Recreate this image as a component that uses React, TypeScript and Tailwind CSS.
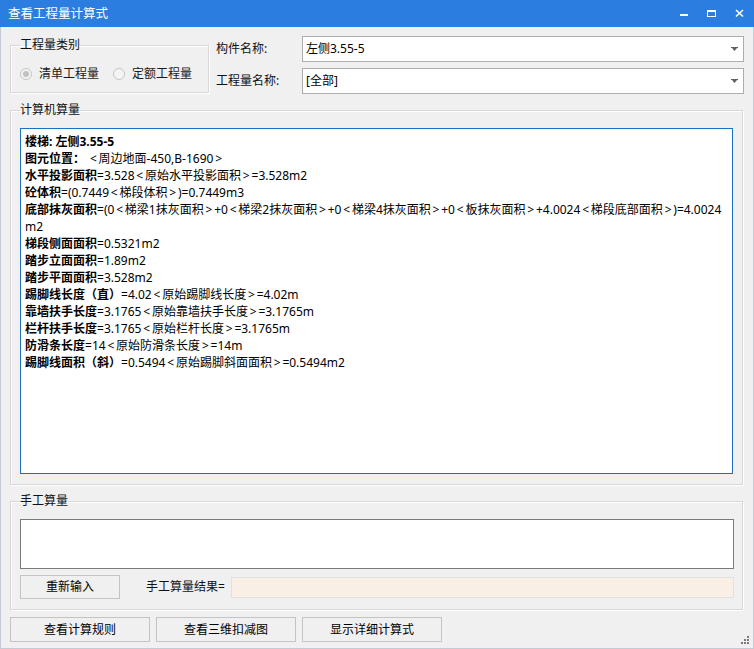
import type { ReactNode } from 'react';

const lines: { label: string; rest?: string }[] = [
  { label: '图元位置：', rest: ' <周边地面-450,B-1690>' },
  { label: '水平投影面积', rest: '=3.528<原始水平投影面积>=3.528m2' },
  { label: '砼体积', rest: '=(0.7449<梯段体积>)=0.7449m3' },
  {
    label: '底部抹灰面积',
    rest: '=(0<梯梁1抹灰面积>+0<梯梁2抹灰面积>+0<梯梁4抹灰面积>+0<板抹灰面积>+4.0024<梯段底部面积>)=4.0024',
  },
  { label: '', rest: 'm2' },
  { label: '梯段侧面面积', rest: '=0.5321m2' },
  { label: '踏步立面面积', rest: '=1.89m2' },
  { label: '踏步平面面积', rest: '=3.528m2' },
  { label: '踢脚线长度（直）', rest: '=4.02<原始踢脚线长度>=4.02m' },
  { label: '靠墙扶手长度', rest: '=3.1765<原始靠墙扶手长度>=3.1765m' },
  { label: '栏杆扶手长度', rest: '=3.1765<原始栏杆长度>=3.1765m' },
  { label: '防滑条长度', rest: '=14<原始防滑条长度>=14m' },
  { label: '踢脚线面积（斜）', rest: '=0.5494<原始踢脚斜面面积>=0.5494m2' },
];

// angle brackets in the original font are wide, pad them a little
function Formula({ text }: { text: string }) {
  return (
    <>
      {text.split(/([<>])/).map((part, i) =>
        part === '<' || part === '>' ? (
          <span key={i} className="px-[1.8px]">
            {part}
          </span>
        ) : (
          part
        ),
      )}
    </>
  );
}

function GroupBox({ title, className, children }: { title: string; className?: string; children: ReactNode }) {
  return (
    <fieldset
      className={`border border-[#d7d7d7] shadow-[inset_1px_1px_0_#ffffff,1px_1px_0_#ffffff] ${className ?? ''}`}
    >
      <legend className="px-0 leading-[16px] text-[#111]">{title}</legend>
      {children}
    </fieldset>
  );
}

function Radio({ checked, label }: { checked?: boolean; label: string }) {
  return (
    <div className="flex items-center gap-[7px]">
      <span className="flex h-[12px] w-[12px] items-center justify-center rounded-full border border-[#c6c6c6] bg-[#f4f4f4]">
        {checked && <span className="h-[6px] w-[6px] rounded-full bg-[#c2c2c2]" />}
      </span>
      <span className="text-[#1a1a1a]">{label}</span>
    </div>
  );
}

function Combo({ value }: { value: string }) {
  return (
    <div className="flex h-[26px] w-[442px] items-center justify-between border border-[#adadad] bg-white pl-[3px] pr-[5px]">
      <span className="text-black">{value}</span>
      <svg width="7" height="4" viewBox="0 0 7 4">
        <path d="M0 0h7v1H0z M1 1h5L3.5 4z" fill="#606060" />
      </svg>
    </div>
  );
}

function WinButton({ label, className }: { label: string; className?: string }) {
  return (
    <button
      className={`flex items-center justify-center border border-[#c4c4c4] bg-[#f0f0f0] text-black ${className ?? ''}`}
    >
      {label}
    </button>
  );
}

export default function App() {
  return (
    <div className="relative flex h-[649px] w-[754px] flex-col border-x border-b border-[#c5cbd5] bg-[#f0f0f0] font-['Noto_Sans','Noto_Sans_CJK_SC',sans-serif] text-[12px] leading-[16px]">
      {/* Title bar */}
      <div className="-mx-[1px] flex h-[27px] shrink-0 items-center justify-between bg-[#2b7ee0] pl-[8px] text-white">
        <span className="text-[12.5px]">查看工程量计算式</span>
        <div className="flex items-center">
          <svg width="28" height="27" viewBox="0 0 28 27">
            <rect x="10" y="14" width="8" height="2" fill="#fff" />
          </svg>
          <svg width="28" height="27" viewBox="0 0 28 27">
            <rect x="9.5" y="10.5" width="8" height="6" fill="none" stroke="#fff" strokeWidth="1" />
            <rect x="9" y="10" width="9" height="2" fill="#fff" />
          </svg>
          <svg width="28" height="27" viewBox="0 0 28 27">
            <path d="M10 10l7 6.5M17 10l-7 6.5" stroke="#fff" strokeWidth="1.6" />
          </svg>
        </div>
      </div>

      <div className="flex flex-1 flex-col px-[9px]">
        {/* Top row */}
        <div className="mt-[9px] flex">
          <GroupBox title="工程量类别" className="mt-[1px] w-[199px] self-start pl-[9px] pt-[13px] pb-[10px]">
            <div className="flex items-center gap-[14px]">
              <Radio checked label="清单工程量" />
              <Radio label="定额工程量" />
            </div>
          </GroupBox>
          <div className="ml-[7px] flex flex-col gap-[6px]">
            <div className="flex items-center">
              <span className="w-[86px] text-[#111]">构件名称:</span>
              <Combo value="左侧3.55-5" />
            </div>
            <div className="flex items-center">
              <span className="w-[86px] text-[#111]">工程量名称:</span>
              <Combo value="[全部]" />
            </div>
          </div>
        </div>

        {/* 计算机算量 */}
        <GroupBox title="计算机算量" className="mt-[8px] mr-[1px] pl-[9px] pr-[9px] pt-[10px] pb-[10px]">
          <div className="h-[346px] overflow-hidden border border-[#1c70c4] bg-white pl-[4px] pt-[4px] leading-[17px] text-black">
            <div className="whitespace-nowrap font-bold">楼梯: 左侧3.55-5</div>
            {lines.map((l, i) => (
              <div key={i} className="whitespace-nowrap">
                {l.label && <span className="font-bold">{l.label}</span>}
                {l.rest && <Formula text={l.rest} />}
              </div>
            ))}
          </div>
        </GroupBox>

        {/* 手工算量 */}
        <GroupBox title="手工算量" className="mt-[8px] mr-[1px] pl-[9px] pr-[8px] pt-[10px] pb-[10px]">
          <div className="h-[50px] border border-[#7a7a7a] bg-white" />
          <div className="mt-[6px] flex items-center">
            <WinButton label="重新输入" className="h-[24px] w-[100px]" />
            <span className="ml-[26px] text-[#111]">手工算量结果=</span>
            <div className="ml-[6px] h-[21px] flex-1 border border-[#e1e1e1] bg-[#faefe5]" />
          </div>
        </GroupBox>

        {/* Bottom buttons */}
        <div className="mt-[7px] flex gap-[6px]">
          <WinButton label="查看计算规则" className="h-[25px] w-[140px]" />
          <WinButton label="查看三维扣减图" className="h-[25px] w-[140px]" />
          <WinButton label="显示详细计算式" className="h-[25px] w-[140px]" />
        </div>
      </div>

      {/* Resize grip */}
      <svg width="10" height="10" viewBox="0 0 10 10" className="absolute bottom-[3px] right-[3px]">
        <rect x="7" y="1" width="2" height="2" fill="#7a7a7a" />
        <rect x="4" y="4" width="2" height="2" fill="#7a7a7a" />
        <rect x="7" y="4" width="2" height="2" fill="#7a7a7a" />
        <rect x="1" y="7" width="2" height="2" fill="#7a7a7a" />
        <rect x="4" y="7" width="2" height="2" fill="#7a7a7a" />
        <rect x="7" y="7" width="2" height="2" fill="#7a7a7a" />
      </svg>
    </div>
  );
}
